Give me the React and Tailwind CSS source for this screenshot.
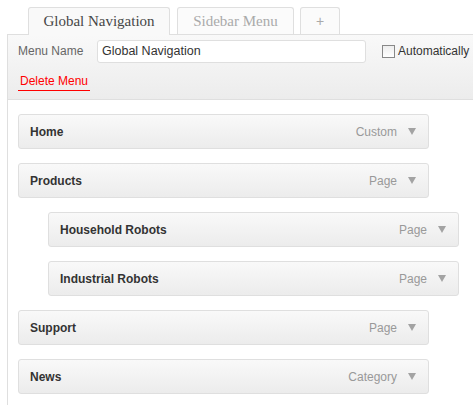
import React from 'react'

const items = [
  { title: 'Home', type: 'Custom', depth: 0 },
  { title: 'Products', type: 'Page', depth: 0 },
  { title: 'Household Robots', type: 'Page', depth: 1 },
  { title: 'Industrial Robots', type: 'Page', depth: 1 },
  { title: 'Support', type: 'Page', depth: 0 },
  { title: 'News', type: 'Category', depth: 0 },
]

const MenuItem = ({ item }) => (
  <div
    className={`flex items-center justify-between w-[411px] h-[35px] pl-[11px] pr-[12px] border border-[#dfdfdf] rounded-[3px] bg-gradient-to-b from-[#f9f9f9] to-[#ececec] ${
      item.depth ? 'ml-[30px]' : ''
    }`}
  >
    <span className="text-[12px] font-bold text-[#333]">{item.title}</span>
    <span className="flex items-center gap-[11px] text-[12px] text-[#999]">
      {item.type}
      <svg width="8" height="7" viewBox="0 0 8 7">
        <path d="M0 0h8L4 7z" fill="#a3a3a3" />
      </svg>
    </span>
  </div>
)

const App = () => {
  return (
    <div className="min-h-screen bg-white pt-[7px] overflow-hidden font-['Liberation_Sans',Arial,sans-serif]">
      {/* tabs */}
      <div className="flex items-end pl-[28px] relative z-10">
        <div className="w-[142px] h-[28px] -mb-px flex items-center justify-center border border-b-0 border-[#dfdfdf] rounded-t-[3px] bg-[#f9f9f9] font-['Liberation_Serif',Georgia,serif] text-[15px] text-[#464646]">
          Global Navigation
        </div>
        <div className="ml-[7px] w-[117px] h-[27px] flex items-center justify-center border border-b-0 border-[#dfdfdf] rounded-t-[3px] bg-[#fbfbfb] font-['Liberation_Serif',Georgia,serif] text-[15px] text-[#aaa]">
          Sidebar Menu
        </div>
        <div className="ml-[6px] w-[40px] h-[27px] flex items-center justify-center border border-b-0 border-[#dfdfdf] rounded-t-[3px] bg-[#fbfbfb] text-[14px] text-[#aaa]">
          +
        </div>
      </div>

      <div className="ml-[7px] border-l border-t border-[#dfdfdf]">
        {/* header */}
        <div className="h-[65px] pl-[10px] pt-[4px] border-b border-[#dfdfdf] bg-gradient-to-b from-[#f9f9f9] to-[#ececec]">
          <div className="flex items-center h-[24px]">
            <span className="text-[12px] text-[#666] w-[79px]">Menu Name</span>
            <div className="w-[269px] h-[23px] flex items-center px-[4px] border border-[#dfdfdf] rounded-[3px] bg-white text-[12.5px] text-[#333]">
              Global Navigation
            </div>
            <label className="flex items-center ml-[16px] text-[12px] text-[#333] whitespace-nowrap">
              <span className="w-[13px] h-[13px] border border-[#888] bg-gradient-to-b from-[#eee] to-white mr-[3px]" />
              Automatically
            </label>
          </div>
          <div className="mt-[5px]">
            <span className="inline-block px-[2px] pb-[1px] border-b border-[#f00] text-[12px] text-[#f00] leading-[15px]">
              Delete Menu
            </span>
          </div>
        </div>

        {/* menu items */}
        <div className="flex flex-col gap-[14px] pl-[10px] pt-[14px] pb-[20px]">
          {items.map((item) => (
            <MenuItem key={item.title} item={item} />
          ))}
        </div>
      </div>
    </div>
  )
}

export default App
